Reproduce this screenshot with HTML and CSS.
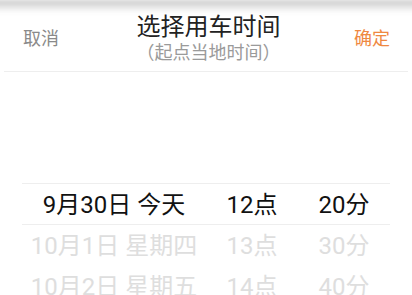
FILE: index.html
```html
<!DOCTYPE html>
<html lang="zh-CN">
<head>
<meta charset="utf-8">
<link rel="stylesheet" href="styles.css">
</head>
<body>
<div class="shade"></div>
<div class="sheet">
  <header class="head">
    <span class="btn cancel">取消</span>
    <div class="titles">
      <div class="title">选择用车时间</div>
      <div class="sub">（起点当地时间）</div>
    </div>
    <span class="btn ok">确定</span>
  </header>
  <div class="picker">
    <div class="band"></div>
    <div class="col c1">
      <div class="item"></div>
      <div class="item"></div>
      <div class="item sel">9月30日 今天</div>
      <div class="item">10月1日 星期四</div>
      <div class="item">10月2日 星期五</div>
    </div>
    <div class="col c2">
      <div class="item"></div>
      <div class="item"></div>
      <div class="item sel">12点</div>
      <div class="item">13点</div>
      <div class="item">14点</div>
    </div>
    <div class="col c3">
      <div class="item"></div>
      <div class="item"></div>
      <div class="item sel">20分</div>
      <div class="item">30分</div>
      <div class="item">40分</div>
    </div>
  </div>
</div>
</body>
</html>
```

FILE: styles.css
```css
html, body {
  margin: 0;
  padding: 0;
  background: #fff;
  height: 295px;
  overflow: hidden;
  font-family: Roboto, "Noto Sans CJK SC", sans-serif;
}
.shade {
  height: 13px;
  margin: 0 -10px;
  background: linear-gradient(#c4c4c4, #e2e2e2 45%, #fff);
  filter: blur(2px);
}
.sheet {
  margin-top: -13px;
  position: relative;
}
.head {
  height: 71px;
  margin: 0 4px;
  border-bottom: 1px solid #eeeeee;
  display: flex;
  align-items: center;
  justify-content: space-between;
  padding: 0 18px 0 19px;
}
.btn {
  font-size: 18px;
  line-height: 22px;
  margin-top: 6px;
}
.cancel { color: #8a8a8a; }
.ok { color: #ef8841; }
.titles {
  align-self: flex-start;
  display: flex;
  flex-direction: column;
  align-items: center;
  margin-top: 13px;
  margin-left: 4px;
}
.title {
  font-size: 24px;
  line-height: 28px;
  color: #222;
}
.sub {
  font-size: 18px;
  line-height: 24px;
  color: #9a9a9a;
}
.picker {
  position: relative;
  display: flex;
  margin: 0 22px;
  padding-top: 31px;
}
.band {
  position: absolute;
  left: 0;
  right: 0;
  top: 111px;
  height: 40px;
  border-top: 1px solid #eeeeee;
  border-bottom: 1px solid #eeeeee;
}
.col {
  display: flex;
  flex-direction: column;
  align-items: center;
}
.c1 { width: 184px; }
.c2 { width: 92px; }
.c3 { width: 92px; }
.item {
  height: 41px;
  line-height: 41px;
  font-size: 24px;
  color: #dedede;
  white-space: nowrap;
}
.item.sel { color: #111; }
```
